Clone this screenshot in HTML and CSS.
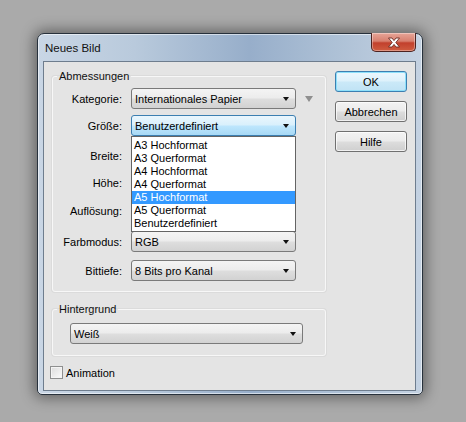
FILE: index.html
```html
<!DOCTYPE html>
<html lang="de">
<head>
<meta charset="utf-8">
<title>Neues Bild</title>
<link rel="stylesheet" href="styles.css">
</head>
<body>
<div class="window">
  <div class="titlebar">
    <span class="title">Neues Bild</span>
    <div class="close">
      <svg width="14" height="11" viewBox="0 0 14 11"><path d="M1.5 1 H5 L7 3.6 L9 1 H12.5 L8.8 5.5 L12.5 10 H9 L7 7.4 L5 10 H1.5 L5.2 5.5 Z" fill="#fff" stroke="#6b2a22" stroke-width="0.9"/></svg>
    </div>
  </div>
  <div class="client">
    <div class="main">
      <fieldset class="group dims">
        <legend>Abmessungen</legend>
        <div class="row">
          <span class="lbl">Kategorie:</span>
          <div class="select"><span>Internationales Papier</span><i class="arrow"></i></div>
          <i class="grey-tri"></i>
        </div>
        <div class="row g6">
          <span class="lbl">Größe:</span>
          <div class="select hot"><span>Benutzerdefiniert</span><i class="arrow"></i>
            <ul class="list">
              <li>A3 Hochformat</li>
              <li>A3 Querformat</li>
              <li>A4 Hochformat</li>
              <li>A4 Querformat</li>
              <li class="sel">A5 Hochformat</li>
              <li>A5 Querformat</li>
              <li>Benutzerdefiniert</li>
            </ul>
          </div>
        </div>
        <div class="row g9"><span class="lbl">Breite:</span></div>
        <div class="row g6"><span class="lbl">Höhe:</span></div>
        <div class="row g7"><span class="lbl">Auflösung:</span></div>
        <div class="row g10">
          <span class="lbl">Farbmodus:</span>
          <div class="select"><span>RGB</span><i class="arrow"></i></div>
        </div>
        <div class="row g8">
          <span class="lbl">Bittiefe:</span>
          <div class="select"><span>8 Bits pro Kanal</span><i class="arrow"></i></div>
        </div>
      </fieldset>
      <fieldset class="group bg">
        <legend>Hintergrund</legend>
        <div class="select wide"><span>Weiß</span><i class="arrow"></i></div>
      </fieldset>
      <label class="check"><span class="box"></span>Animation</label>
    </div>
    <div class="buttons">
      <div class="btn default">OK</div>
      <div class="btn">Abbrechen</div>
      <div class="btn">Hilfe</div>
    </div>
  </div>
</div>
</body>
</html>
```
FILE: styles.css
```css
html, body {
  margin: 0;
}
body {
  width: 466px;
  height: 422px;
  box-sizing: border-box;
  padding: 33px 0 0 37px;
  background: #aaaaaa;
  font-family: "Liberation Sans", Arial, sans-serif;
  font-size: 11px;
  color: #000;
  overflow: hidden;
}
.window {
  position: relative;
  width: 386px;
  height: 362px;
  box-sizing: border-box;
  border: 1px solid #27313c;
  border-radius: 7px 7px 5px 5px;
  background: linear-gradient(90deg, #c9d6e5 0%, #b9cadc 25%, #97aeca 55%, #aec1d6 78%, #c4d2e2 100%);
  box-shadow: 0 0 14px 3px rgba(0,0,0,0.42), inset 0 0 0 1px rgba(255,255,255,0.55);
  display: flex;
  flex-direction: column;
}
.titlebar {
  height: 27px;
  display: flex;
  align-items: center;
}
.title {
  padding-left: 7px;
  font-size: 11.5px;
  color: #111;
}
.close {
  position: absolute;
  top: -1px;
  right: 6px;
  width: 45px;
  height: 19px;
  box-sizing: border-box;
  border: 1px solid #4c2220;
  border-top: none;
  border-radius: 0 0 5px 5px;
  background: linear-gradient(#e7a598 0%, #d8806f 45%, #c2402d 55%, #cf5c40 100%);
  box-shadow: inset 0 0 0 1px rgba(255,255,255,0.35);
  display: flex;
  align-items: center;
  justify-content: center;
}
.client {
  flex: 1;
  margin: 0 6px 3px 5px;
  border: 1px solid #6e7d8e;
  background: #e4e4e4;
  display: flex;
  padding: 0 8px 0 8px;
}
.main {
  width: 275px;
  display: flex;
  flex-direction: column;
}
.group {
  margin: 0;
  border: 1px solid #f7f7f7;
  border-radius: 3px;
  box-shadow: 0 0 0 1px rgba(190,190,190,0.25);
  padding: 0;
  min-width: 0;
}
.group legend {
  margin-left: 4px;
  padding: 0 2px;
  line-height: 13px;
  color: #111;
}
.dims {
  margin-top: 8px;
  padding: 5px 0 10px 0;
}
.row {
  height: 21px;
  display: flex;
  align-items: center;
}
.row.g6 { margin-top: 6px; }
.row.g7 { margin-top: 7px; }
.row.g8 { margin-top: 8px; }
.row.g9 { margin-top: 9px; }
.row.g10 { margin-top: 10px; }
.lbl {
  width: 69px;
  text-align: right;
  margin-right: 9px;
  flex: none;
}
.select {
  position: relative;
  width: 165px;
  height: 21px;
  box-sizing: border-box;
  border: 1px solid #7a7a7a;
  border-radius: 3px;
  background: linear-gradient(#f4f4f4 0%, #ececec 48%, #dedede 52%, #d2d2d2 100%);
  display: flex;
  align-items: center;
  padding-left: 3px;
  flex: none;
}
.select.hot {
  border-color: #3c7fb1;
  background: linear-gradient(#eaf6fd 0%, #d9f0fc 48%, #bee6fd 52%, #a7d9f5 100%);
}
.arrow {
  position: absolute;
  right: 6px;
  top: 8px;
  width: 0;
  height: 0;
  border-left: 3.5px solid transparent;
  border-right: 3.5px solid transparent;
  border-top: 4px solid #111;
}
.grey-tri {
  margin-left: 9px;
  width: 0;
  height: 0;
  border-left: 4px solid transparent;
  border-right: 4px solid transparent;
  border-top: 6px solid #8f8f8f;
}
.list {
  position: absolute;
  left: -1px;
  top: calc(100% + 1px);
  margin: 0;
  padding: 2px 0 1px 0;
  list-style: none;
  width: 165px;
  box-sizing: border-box;
  border: 1px solid #646464;
  background: #fff;
  z-index: 2;
}
.list li {
  height: 13px;
  line-height: 13px;
  padding-left: 2px;
}
.list li.sel {
  background: #3399ff;
  color: #fff;
}
.bg {
  margin-top: 11px;
  padding: 7px 0 11px 0;
}
.bg .select.wide {
  width: 233px;
  margin-left: 17px;
}
.check {
  margin-top: 10px;
  margin-left: -2px;
  display: flex;
  align-items: center;
}
.box {
  width: 13px;
  height: 13px;
  box-sizing: border-box;
  border: 1px solid #8e8f8f;
  background: linear-gradient(135deg, #dcdcdc, #fbfbfb);
  box-shadow: inset 0 0 0 1px #f4f4f4;
  margin-right: 3px;
}
.buttons {
  margin-left: 9px;
  padding-top: 9px;
  display: flex;
  flex-direction: column;
  gap: 9px;
}
.btn {
  width: 72px;
  height: 21px;
  box-sizing: border-box;
  border: 1px solid #707070;
  border-radius: 3px;
  background: linear-gradient(#f3f3f3 0%, #ebebeb 48%, #dddddd 52%, #cfcfcf 100%);
  box-shadow: inset 0 0 0 1px rgba(255,255,255,0.7);
  display: flex;
  align-items: center;
  justify-content: center;
}
.btn.default {
  border-color: #3c7fb1;
  background: linear-gradient(#edf7fd 0%, #ddf1fb 48%, #cbe9f8 52%, #c0e3f5 100%);
  box-shadow: inset 0 0 0 1px #8ee0fa;
}
```
